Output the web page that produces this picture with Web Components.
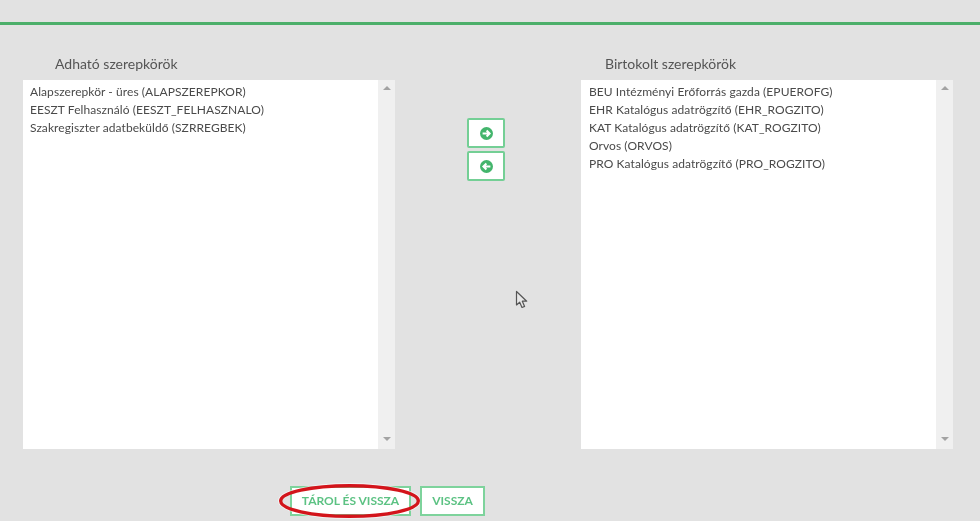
<!DOCTYPE html>
<html lang="hu"><head><meta charset="utf-8"><title>Szerepkörök</title>
<style>
html,body{margin:0;padding:0;background:#e2e2e2;height:100%;overflow:hidden}
body{font:12px/18px "Lato","Noto Sans",sans-serif;color:#4a4a4a}
</style></head><body>
<role-page>
  <role-list slot="left" heading="Adható szerepkörök" inset="32" pad="7">
    <div>Alapszerepkör - üres (ALAPSZEREPKOR)</div>
    <div>EESZT Felhasználó (EESZT_FELHASZNALO)</div>
    <div>Szakregiszter adatbeküldő (SZRREGBEK)</div>
  </role-list>
  <move-btn slot="mid" dir="right"></move-btn>
  <move-btn slot="mid" dir="left"></move-btn>
  <role-list slot="right" heading="Birtokolt szerepkörök" inset="24" pad="8">
    <div>BEU Intézményi Erőforrás gazda (EPUEROFG)</div>
    <div>EHR Katalógus adatrögzítő (EHR_ROGZITO)</div>
    <div>KAT Katalógus adatrögzítő (KAT_ROGZITO)</div>
    <div>Orvos (ORVOS)</div>
    <div>PRO Katalógus adatrögzítő (PRO_ROGZITO)</div>
  </role-list>
  <action-btn slot="actions" circled style="width:121px">TÁROL ÉS VISSZA</action-btn>
  <action-btn slot="actions" style="width:65px">VISSZA</action-btn>
</role-page>
<script>
const def=(n,html)=>customElements.define(n,class extends HTMLElement{
  connectedCallback(){if(!this.shadowRoot)this.attachShadow({mode:'open'}).innerHTML=typeof html==='function'?html(this):html;}
});
def('role-page',`<style>
:host{display:block;width:980px;height:521px;position:relative;overflow:hidden;background:#e2e2e2;filter:blur(.3px)}
.top{height:22px;border-bottom:3px solid #4caf6a}
.cols{display:flex;padding:30px 0 0 23px;align-items:flex-start}
.mid{width:186px;display:flex;flex-direction:column;align-items:center;gap:3px;padding:63px 4px 0 0;box-sizing:border-box;flex:none}
.actions{display:flex;gap:9px;padding:37px 0 0 290px}
.cursor{position:absolute;left:515px;top:290px}
</style>
<div class="top"></div>
<div class="cols"><slot name="left"></slot><div class="mid"><slot name="mid"></slot></div><slot name="right"></slot></div>
<div class="actions"><slot name="actions"></slot></div>
<svg class="cursor" width="14" height="20" viewBox="0 0 14 20"><path d="M1.5 1.5V15l3.2-2.8 2.3 5.3 2.6-1.1-2.3-5.2h4.4z" fill="#e8e8e8" stroke="#555" stroke-width="1.2" stroke-linejoin="round"/></svg>`);
def('role-list',h=>`<style>
:host{display:block;width:372px;flex:none}
.h{height:25px;padding-left:${h.getAttribute('inset')}px;font-size:14px;line-height:17px;color:#555}
.box{height:369px;background:#fff;display:flex}
.items{flex:1;padding:3px ${h.getAttribute('pad')}px;font-size:12px;line-height:18px;letter-spacing:.07px;color:#4a4a4a;white-space:nowrap}
.sb{width:17px;background:#f0f0f0;display:flex;flex-direction:column;justify-content:space-between;align-items:center;padding:6px 0 8px;box-sizing:border-box}
.sb i{width:0;height:0;border:4px solid transparent}
.u{border-bottom:4px solid #a3a3a3!important;border-top:0!important}
.d{border-top:4px solid #a3a3a3!important;border-bottom:0!important}
</style><div class="h">${h.getAttribute('heading')}</div>
<div class="box"><div class="items"><slot></slot></div><div class="sb"><i class="u"></i><i class="d"></i></div></div>`);
def('move-btn',h=>{const r=h.getAttribute('dir')==='right';
return `<style>
:host{display:block}
.b{width:38px;height:30px;box-sizing:border-box;border:2px solid #74cf95;border-radius:2px;background:#fff;display:flex;align-items:center;justify-content:center}
</style><div class="b"><svg width="13" height="13" viewBox="0 0 13 13"><circle cx="6.5" cy="6.5" r="6.5" fill="#43b56c"/><path d="${r?'M2.6 6.5H9M6.6 3.5l3 3-3 3':'M10.4 6.5H4M6.4 3.5l-3 3 3 3'}" fill="none" stroke="#fff" stroke-width="2"/></svg></div>`});
def('action-btn',h=>`<style>
:host{display:block;position:relative;box-sizing:border-box;height:30px;border:2px solid #7ed39c;background:#fff;color:#5cc283;font:700 12px/26px "Lato","Noto Sans",sans-serif;text-align:center;white-space:nowrap;flex:none}
svg{position:absolute;left:-13px;top:-4px;overflow:visible;pointer-events:none}
</style><slot></slot>${h.hasAttribute('circled')?`<svg width="141" height="34" viewBox="0 0 141 34"><ellipse cx="70.5" cy="17" rx="70" ry="16.6" fill="none" stroke="#fff" stroke-opacity=".6" stroke-width="3"/><ellipse cx="70.5" cy="17" rx="68.8" ry="15.3" fill="none" stroke="#d3141b" stroke-width="3.4"/></svg>`:''}`);
</script>
</body></html>
